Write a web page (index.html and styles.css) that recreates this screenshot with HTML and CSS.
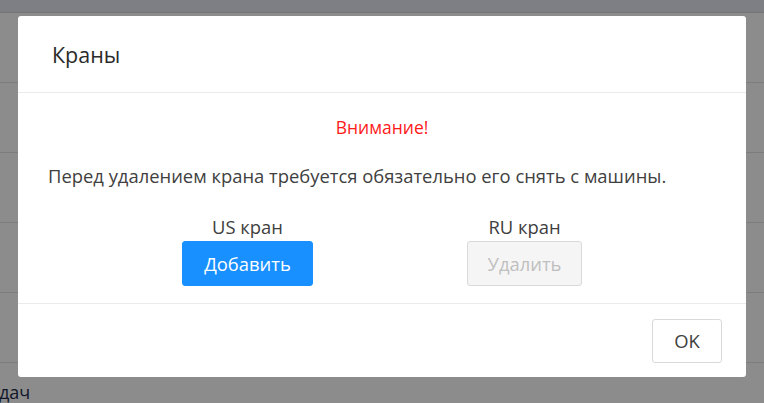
FILE: index.html
```html
<!DOCTYPE html>
<html lang="ru">
<head>
<meta charset="utf-8">
<title>Краны</title>
<link rel="stylesheet" href="styles.css">
</head>
<body>
<div class="page">
  <div class="topbar"></div>
  <div class="row"></div>
  <div class="row"></div>
  <div class="row"></div>
  <div class="row"></div>
  <div class="row"></div>
  <div class="row last"><span class="under-text">дач</span></div>
</div>
<div class="mask"></div>
<div class="modal">
  <div class="modal-header">
    <div class="modal-title">Краны</div>
  </div>
  <div class="modal-body">
    <div class="warning">Внимание!</div>
    <p class="message">Перед удалением крана требуется обязательно его снять с машины.</p>
    <div class="actions">
      <div class="action">
        <div class="action-label">US кран</div>
        <button class="btn btn-primary">Добавить</button>
      </div>
      <div class="action">
        <div class="action-label">RU кран</div>
        <button class="btn btn-disabled" disabled>Удалить</button>
      </div>
    </div>
  </div>
  <div class="modal-footer">
    <button class="btn btn-default">OK</button>
  </div>
</div>
</body>
</html>
```
FILE: styles.css
```css
* { box-sizing: border-box; }
html, body {
  margin: 0;
  padding: 0;
  width: 764px;
  height: 403px;
  overflow: hidden;
  font-family: "Open Sans", "Noto Sans", sans-serif;
}
body { background: #fff; }
.page { display: flex; flex-direction: column; height: 403px; }
.topbar { height: 13px; background: #e6e8f0; border-bottom: 1px solid #d6d6d6; flex: none; }
.row { height: 70px; border-bottom: 1px solid #e2e2e2; flex: none; }
.row.last { height: 40px; border-bottom: none; padding: 19px 0 0 0; }
.under-text {
  display: block;
  font-size: 18px;
  line-height: 20px;
  color: #1f2d4d;
  margin-left: -1px;
}
.mask {
  position: fixed;
  inset: 0;
  background: rgba(0, 0, 0, 0.45);
}
.modal {
  position: absolute;
  left: 18px;
  top: 16px;
  width: 728px;
  height: 361px;
  background: #fff;
  border-radius: 3px;
  display: flex;
  flex-direction: column;
  color: #404040;
}
.modal-header {
  height: 77px;
  padding: 0 34px;
  display: flex;
  align-items: center;
  border-bottom: 1px solid #ebebeb;
}
.modal-title {
  font-size: 21.5px;
  color: #2a2a2a;
  padding-top: 1px;
}
.modal-body {
  flex: 1;
  padding: 22px 30px 0;
  border-bottom: 1px solid #ebebeb;
}
.warning {
  text-align: center;
  color: #ff1a1a;
  font-size: 17.5px;
  line-height: 24px;
}
.message {
  margin: 25px 0 0;
  font-size: 18.4px;
  line-height: 24px;
}
.actions {
  display: flex;
  justify-content: center;
  gap: 154px;
  margin-top: 27px;
}
.action {
  display: flex;
  flex-direction: column;
  align-items: center;
}
.action-label {
  font-size: 18.4px;
  line-height: 24px;
  margin-bottom: 2px;
}
.btn {
  font-family: inherit;
  font-size: 18.4px;
  height: 45px;
  border-radius: 3px;
  padding: 0;
  cursor: pointer;
}
.btn-primary {
  width: 131px;
  background: #1890ff;
  border: 1px solid #1890ff;
  color: #fff;
}
.btn-disabled {
  width: 115px;
  background: #f5f5f5;
  border: 1px solid #d9d9d9;
  color: #bfbfbf;
}
.modal-footer {
  height: 73px;
  padding: 0 24px;
  display: flex;
  align-items: center;
  justify-content: flex-end;
}
.btn-default {
  width: 70px;
  height: 44px;
  background: #fff;
  border: 1px solid #d9d9d9;
  color: #404040;
}
```
